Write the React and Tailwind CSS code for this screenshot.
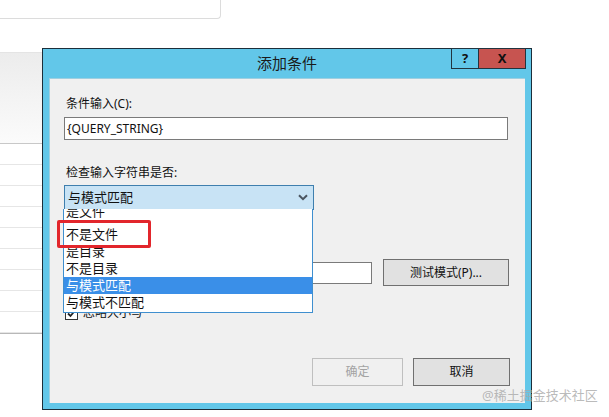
import React from "react";

const FONT = "font-['Noto_Sans','Noto_Sans_CJK_SC',sans-serif]";

const options = ["是文件", "不是文件", "是目录", "不是目录", "与模式匹配", "与模式不匹配"];

function Chevron() {
  return (
    <svg width="10" height="7" viewBox="0 0 10 7">
      <path d="M1 1.2 L5 5.2 L9 1.2" fill="none" stroke="#4a5560" strokeWidth="2" />
    </svg>
  );
}

function Background() {
  // 对话框背后的页面残影
  return (
    <div className="flex flex-col">
      <div className="h-[19px] w-[221px] border-b border-r border-[#dcdcdc] rounded-br-[4px] bg-white" />
      <div className="mt-[33px] w-[42px] border-t border-[#e4e4e4]">
        <div className="h-[90px] bg-gradient-to-b from-[#ececec] to-[#fbfbfb]" />
        <div className="border-t border-[#c8c8c8]">
          {Array.from({ length: 9 }).map((_, i) => (
            <div key={i} className="h-[21px] border-b border-[#e6e6e6]" />
          ))}
        </div>
        <div className="border-t border-[#b8b8b8]" />
      </div>
    </div>
  );
}

export default function App() {
  return (
    <div className={`relative w-[609px] h-[417px] overflow-hidden bg-white text-[#111] ${FONT}`}>
      <Background />

      {/* 添加条件 对话框 */}
      <div className="absolute left-[42px] top-[48px] w-[490px] h-[362px] border border-[#1c2e3a] bg-[#62c7e9] flex flex-col">
        <div className="relative h-[29px] shrink-0 flex items-center justify-center">
          <span className="text-[15px] leading-none text-[#1a1a1a]">添加条件</span>
          <div className="absolute right-[5px] top-[-1px] flex">
            <div className="w-[28px] h-[21px] border border-[#22343f] flex items-center justify-center text-[13px] font-bold leading-none">?</div>
            <div className="w-[47px] h-[21px] border border-l-0 border-[#22343f] bg-[#c75450] flex items-center justify-center text-[13px] font-bold leading-none">X</div>
          </div>
        </div>

        <div className="relative mx-[6px] mb-[6px] flex-1 bg-[#f0f0f0] border-l border-t border-[#9fcfe0] flex flex-col px-[14px] pt-[17px] pb-[17px] text-[12px]">
          <div className="h-[16px] leading-[16px] pl-[2px]">条件输入(C):</div>
          <div className="mt-[5px] h-[23px] w-[444px] border border-[#7a7a7a] bg-white flex items-center pl-[2px] leading-none">
            {"{QUERY_STRING}"}
          </div>

          <div className="mt-[25px] h-[16px] leading-[16px] pl-[2px]">检查输入字符串是否:</div>
          <div className="mt-[4px] h-[25px] w-[250px] border border-[#3f7fae] bg-[#c8e3f5] flex items-center justify-between pl-[3px] pr-[5px] leading-none">
            <span className="text-[13px]">与模式匹配</span>
            <Chevron />
          </div>

          <div className="mt-[49px] h-[27px] flex items-center">
            <div className="h-[22px] w-[308px] border border-[#7a7a7a] bg-white" />
            <button className="ml-[11px] h-[27px] w-[126px] border border-[#707070] bg-[#e1e1e1] leading-none">
              测试模式(P)...
            </button>
          </div>

          <div className="mt-[20px] h-[14px] flex items-center gap-[5px] pl-[1px]">
            <div className="w-[13px] h-[13px] border border-[#333] bg-white flex items-center justify-center">
              <svg width="9" height="9" viewBox="0 0 9 9">
                <path d="M1 4.5 L3.5 7 L8 1.5" fill="none" stroke="#222" strokeWidth="1.8" />
              </svg>
            </div>
            <span className="leading-none">忽略大小写</span>
          </div>

          <div className="mt-auto flex justify-end gap-[10px] pr-[1px]">
            <button className="h-[28px] w-[91px] border border-[#bfbfbf] bg-[#f0f0f0] text-[#a3a3a3] leading-none">确定</button>
            <button className="h-[28px] w-[97px] border border-[#707070] bg-[#e1e1e1] leading-none">取消</button>
          </div>

          {/* 下拉列表 */}
          <div className="absolute left-[13px] top-[130px] w-[250px] h-[104px] border border-[#3f8fcf] border-t-0 bg-white overflow-hidden text-[13px]">
            {options.map((o, i) => (
              <div
                key={o}
                className={`h-[17px] leading-[17px] pl-[2px] overflow-hidden ${
                  o === "与模式匹配" ? "bg-[#3a8fe8] text-white" : ""
                }`}
              >
                <span className={i === 0 ? "block -mt-[6px]" : "block"}>{o}</span>
              </div>
            ))}
          </div>

          {/* 红框标注 */}
          <div className="absolute left-[7px] top-[141px] w-[94px] h-[28px] border-[3px] border-[#e2262c] rounded-[2px]" />
        </div>
      </div>

      <div className="absolute left-[482px] top-[389px] text-[13px] leading-none text-[#a8a8a8]/80">@稀土掘金技术社区</div>
    </div>
  );
}
